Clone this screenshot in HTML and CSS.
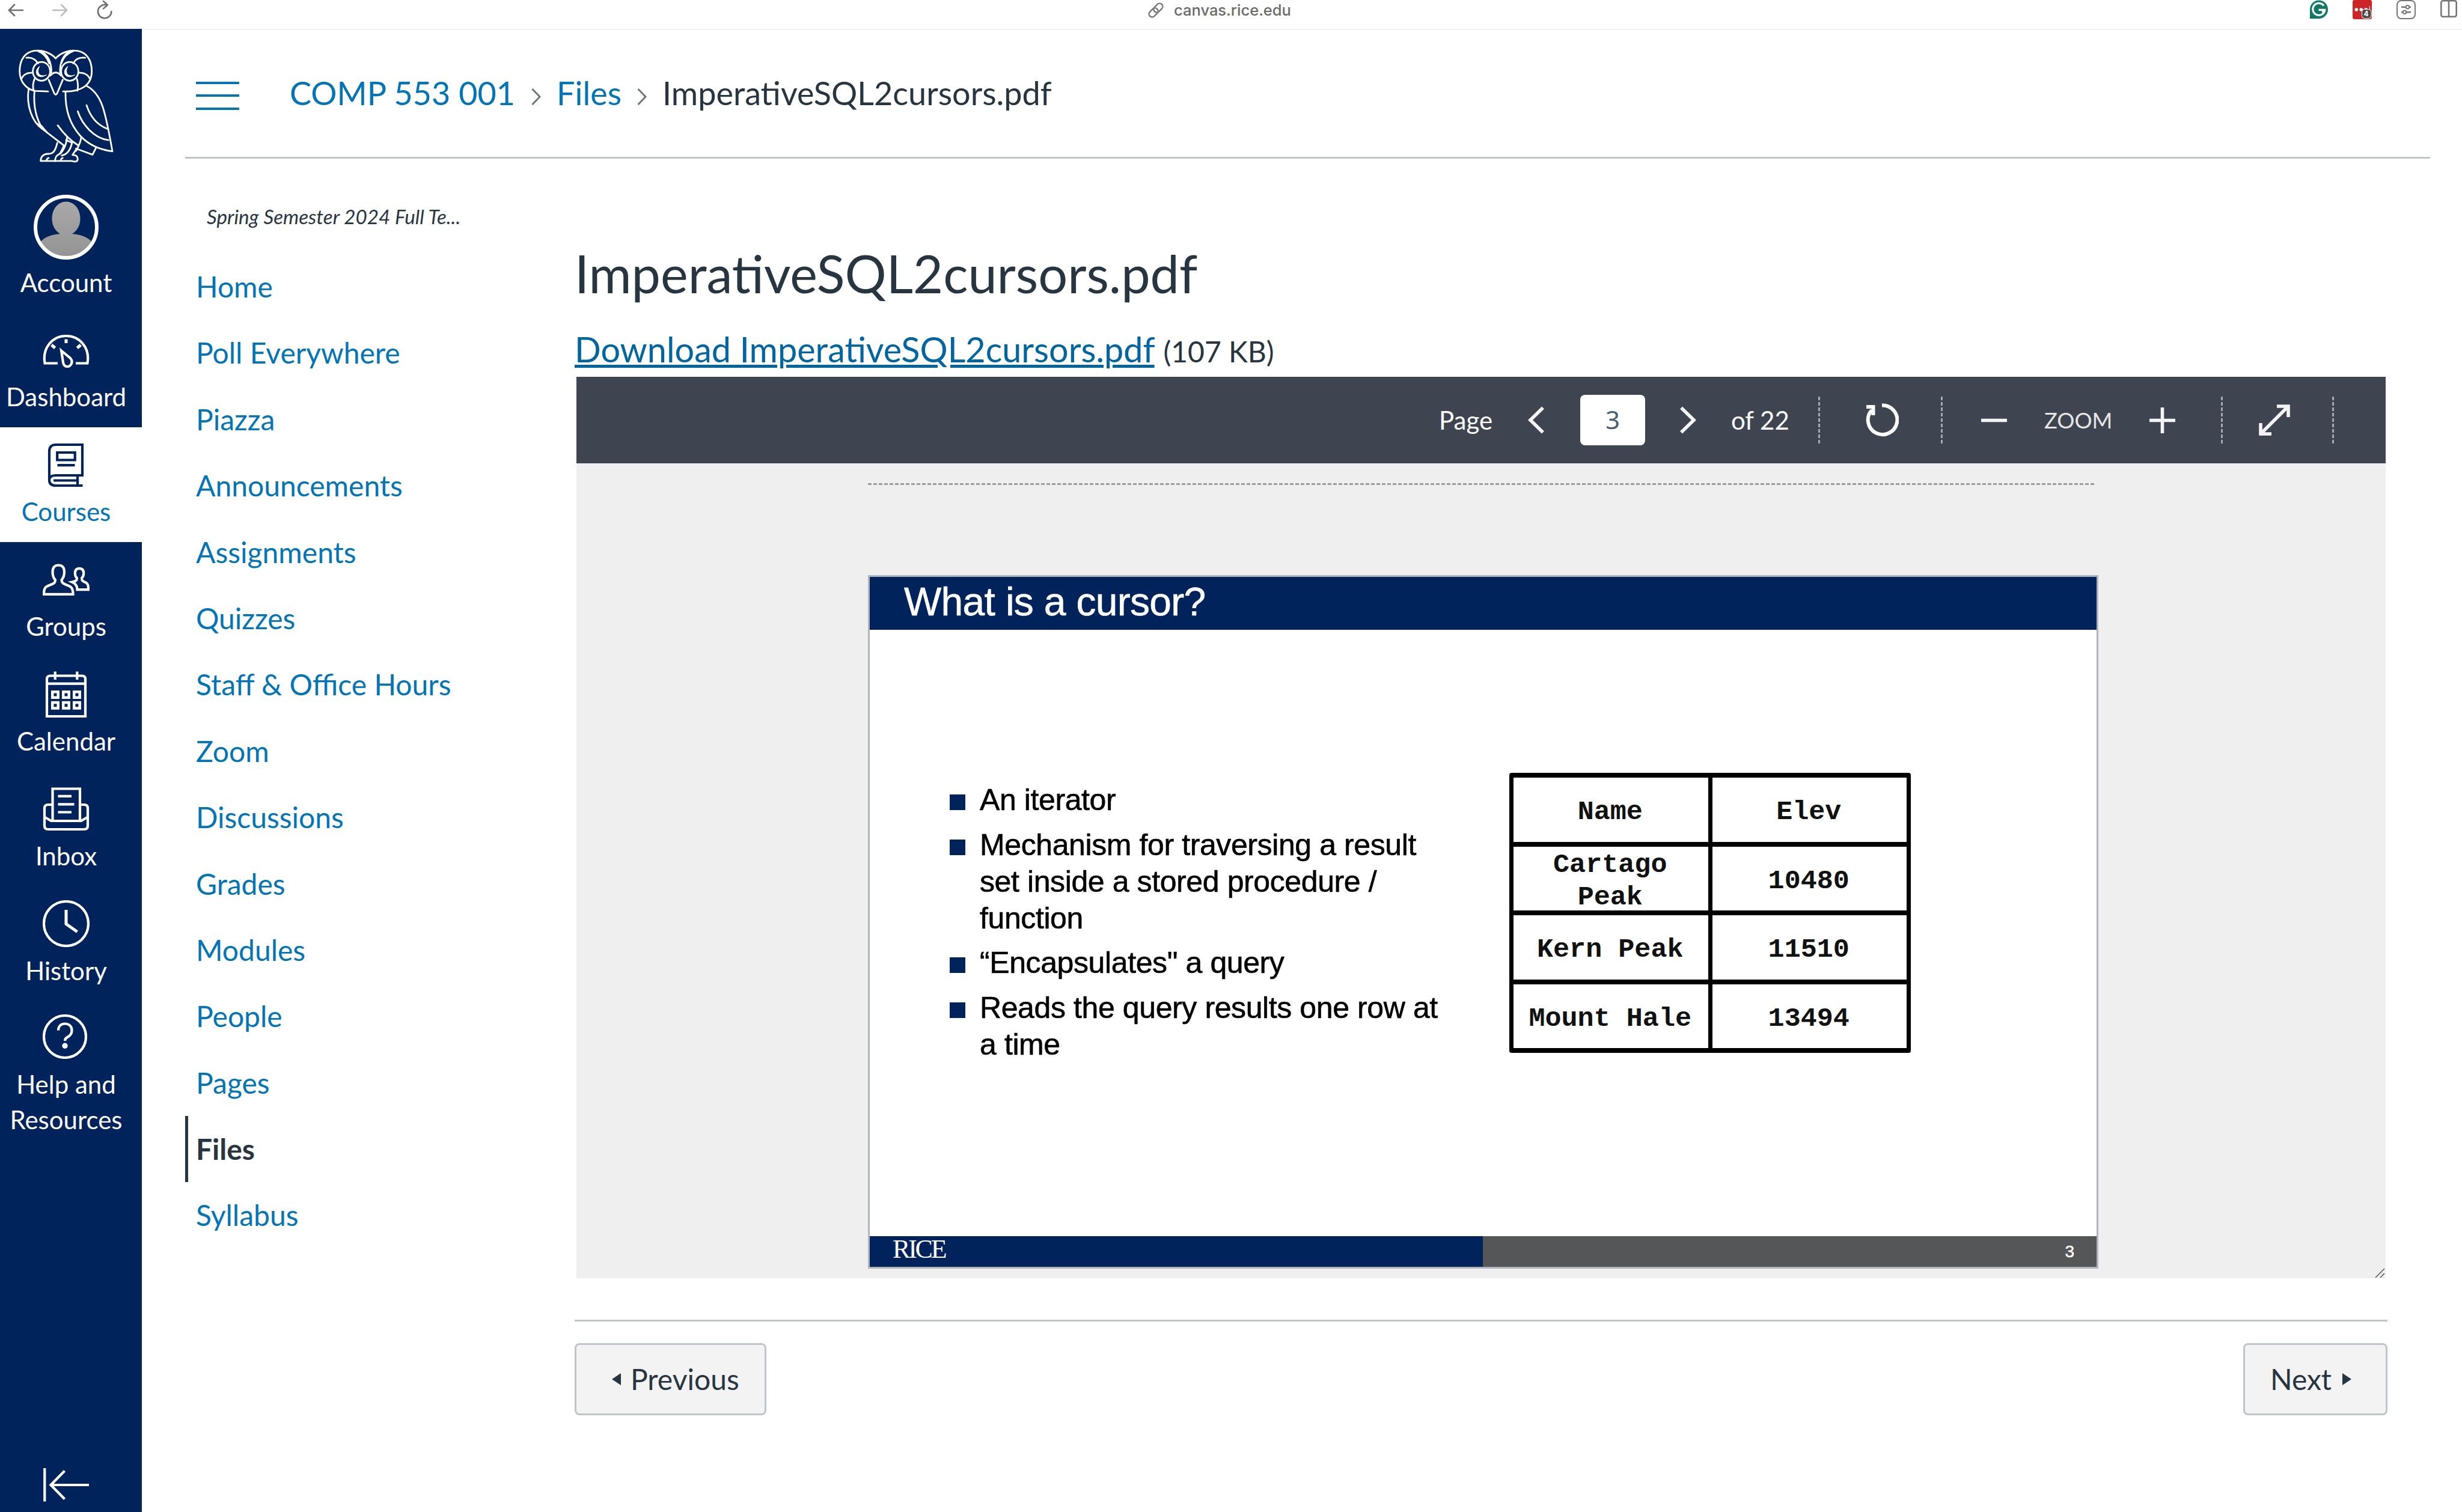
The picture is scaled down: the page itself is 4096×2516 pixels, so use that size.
FILE: index.html
```
<!DOCTYPE html>
<html lang="en">
<head>
<meta charset="utf-8">
<title>ImperativeSQL2cursors.pdf</title>
<link rel="stylesheet" href="styles.css">
</head>
<body>
<header class="browser">
  <div class="browser-nav">
    <svg width="26" height="22" viewBox="0 0 26 22"><path d="M25 11H2M11 2L2 11l9 9"/></svg>
    <svg class="dim" width="26" height="22" viewBox="0 0 26 22"><path d="M1 11h23M15 2l9 9-9 9"/></svg>
    <svg class="reload" width="26" height="32" viewBox="0 0 26 32"><path d="M14.5 8A11.2 11.2 0 1 0 24.3 19M11 2l7 6.2-7 6.2"/></svg>
  </div>
  <div class="browser-url">
    <svg width="26" height="26" viewBox="0 0 26 26"><g transform="rotate(-45 13 13)"><rect x="-1" y="7.8" width="17" height="10.4" rx="5.2"/><rect x="10" y="7.8" width="17" height="10.4" rx="5.2"/></g></svg>
    <span>canvas.rice.edu</span>
  </div>
  <div class="browser-ext">
    <svg width="30" height="31" viewBox="0 0 30 31"><path class="badge-drop" d="M0 31V15.5A15 15.3 0 1 1 15 31z"/><path d="M23 9.5A10 10 0 1 0 24.8 16.3H14.5M20.5 20.5l4.3-4.2" fill="none" stroke="#fff" stroke-width="3.2"/></svg>
    <svg width="32" height="32" viewBox="0 0 32 32"><rect width="32" height="32" rx="3" fill="#cb2429"/><circle cx="6.3" cy="16" r="2.8" fill="#fff"/><circle cx="14.3" cy="16" r="2.8" fill="#fff"/><circle cx="22.3" cy="16" r="2.8" fill="#fff"/><path d="M28.3 10v8" stroke="#fff"/><rect x="15.5" y="15.5" width="15.5" height="15" rx="4" fill="#4a4a4a" stroke="#fff"/><text x="22.500" y="27" text-anchor="middle" class="ext-count">4</text></svg>
    <svg width="32" height="32" viewBox="0 0 32 32"><g fill="none" stroke="#767676" stroke-width="2"><rect x="1" y="1" width="30" height="30" rx="7"/><path d="M8 11.7h7.500M21.500 11.700H24M8 20.300h2.500M16.500 20.300H24" stroke-width="2.400"/><circle cx="18.500" cy="11.700" r="2.700"/><circle cx="13.500" cy="20.300" r="2.700"/></g></svg>
    <svg width="28" height="29" viewBox="0 0 28 29"><g fill="none" stroke="#767676" stroke-width="2.600"><rect x="1.300" y="1.300" width="25.400" height="26.400" rx="3"/><path d="M14 1v27"/></g></svg>
  </div>
</header>

<div class="app">
  <nav class="global-nav">
    <a class="logo">
      <svg width="160" height="192" viewBox="90 175 480 418" preserveAspectRatio="none">
        <path d="M278 210C225 168 98 165 98 256C98 300 140 325 178 328L240 330"/>
        <path d="M278 210C330 168 458 165 458 256C458 310 400 332 315 330"/>
        <ellipse cx="207" cy="257" rx="43" ry="34"/><ellipse cx="348" cy="257" rx="43" ry="34"/>
        <path class="solid" d="M197 240C165 254 182 292 232 270C198 280 180 262 197 240z"/>
        <path class="solid" d="M338 240C306 254 323 292 373 270C339 280 321 262 338 240z"/>
        <path d="M256 262C258 225 240 195 200 184M245 228C233 202 215 190 190 184"/>
        <path d="M300 262C298 225 315 195 352 184M306 228C318 202 340 190 365 184"/>
        <path d="M132 208C160 205 178 215 190 228M108 283C120 265 140 262 164 262M425 208C395 205 375 215 365 228M448 283C435 265 415 262 391 262"/>
        <path d="M168 327C162 310 165 300 172 285M386 327C392 310 390 300 384 285"/>
        <path d="M243 288L271 337Q278 346 285 337L313 288M250 273Q278 250 306 273"/>
        <path d="M143 320C130 380 160 440 210 465L318 525M172 328C165 390 185 435 215 468"/>
        <path class="solid" d="M178 442C190 456 210 470 240 480L210 454z"/>
        <path d="M327 333C325 400 350 450 400 490C440 522 490 540 561 547C545 480 530 420 510 380C490 342 460 320 432 310"/>
        <path d="M388 402C410 450 470 500 541 506M432 380C450 420 480 450 535 465"/>
        <path d="M288 453C320 485 355 510 388 524M380 537L462 559L480 533M405 495C405 510 395 525 380 545"/>
        <path d="M286 516C275 550 262 556 240 556C215 556 203 568 203 582H360C375 586 388 584 388 575C388 562 375 560 362 560L380 540"/>
        <path d="M318 528C305 550 300 556 285 562C275 568 275 580 276 582M335 495C330 530 310 550 300 556M360 515C350 545 335 558 308 562"/>
        <path d="M330 506L354 514M232 580Q236 571 243 571M303 580Q307 571 313 571"/>
      </svg>
    </a>
    <a class="nav-item account">
      <svg width="108" height="108" viewBox="0 0 108 108"><defs><linearGradient id="g" x1="0" y1="0" x2="0" y2="1"><stop offset="0" stop-color="#aaa8a8"/><stop offset="1" stop-color="#939393"/></linearGradient><clipPath id="c"><circle cx="54" cy="54" r="49"/></clipPath></defs><path clip-path="url(#c)" fill="url(#g)" d="M54 11.500c13 0 23.500 12 23.500 28.500 0 12-6 21-13.500 25 20 2 30 8 36 18V108H8V83c6-10 16-16 36-18-7.500-4-13.500-13-13.500-25 0-16.500 10.500-28.500 23.500-28.500z"/><circle cx="54" cy="54" r="51" fill="none" stroke="#fff" stroke-width="6"/></svg>
      <span>Account</span>
    </a>
    <a class="nav-item">
      <svg width="78" height="78" viewBox="0 0 78 78"><path d="M25 61.500H3.600C-1 36 16 16 39 16S79 36 74.400 61.500H55"/><path d="M39 21.500v6.500M14.800 31l5.800 5M63.200 31l-5.800 5" stroke-width="5"/><path d="M31 40.500L46 53C52 60 46 67 41 67C37 67 34.500 64 34 60z"/></svg>
      <span>Dashboard</span>
    </a>
    <a class="nav-item active">
      <svg width="78" height="78" viewBox="0 0 78 78"><path d="M66 57V6H22Q11 6 11 17V65Q11 74 22 74H66.500M11 65Q11 57 22 57H68M18 65.500H58M58 57V74"/><path d="M24.200 19h29.500v12.500H24.200zM24.500 40.200H53.500"/></svg>
      <span>Courses</span>
    </a>
    <a class="nav-item">
      <svg width="78" height="78" viewBox="0 0 78 78"><path d="M2 63.800C2 53 5 51 12 48.500C19 46 21 45 21 40C17 36 16.500 32 16.500 27C16.500 19 20 15.500 26.300 15.500S36 19 36 27C36 32 35 36 31.500 40C31.500 45 34 46 40 48.500C48 51 50.500 54 50.500 63.800z"/><path d="M49 43.500C54 42.500 57 41.500 57 37C54.500 34.500 53.800 32 53.800 29C53.800 23.500 56.500 20.800 61 20.800S68.200 23.500 68.200 29C68.200 32 67.500 34.500 65 37C65 41.500 67 42.500 71 44C75 46 76 48 76 56.200H57.500C57.500 50 55 46 49 43.500z"/></svg>
      <span>Groups</span>
    </a>
    <a class="nav-item">
      <svg width="78" height="78" viewBox="0 0 78 78"><path d="M7 76V14Q7 8.500 12.500 8.500H65.500Q71 8.500 71 14V76zM7 21.700H71"/><path d="M20.700 1.500V15M57.300 1.500V15"/><path stroke-width="4.500" d="M16.200 35.200h9.500v9.500h-9.500zM34.200 35.200h9.500v9.500h-9.500zM52.200 35.200h9.500v9.500h-9.500zM16.200 53h9.500v9.500h-9.500zM34.200 53h9.500v9.500h-9.500zM52.200 53h9.500v9.500h-9.500z"/></svg>
      <span>Calendar</span>
    </a>
    <a class="nav-item">
      <svg width="78" height="78" viewBox="0 0 78 78"><path d="M16.500 58V5.500H62V58M25.500 17.800H48M25.500 31.400H52.500M25.500 44.500H48"/><path d="M16 32H9Q3 32 3 38V67Q3 73 9 73H69Q75 73 75 67V38Q75 32 69 32H62M3 52.500L14 59H64L75 52.500"/></svg>
      <span>Inbox</span>
    </a>
    <a class="nav-item">
      <svg width="78" height="78" viewBox="0 0 78 78"><circle cx="39" cy="39" r="37"/><path stroke-width="5" d="M39 16V39.500L57.500 52.500"/></svg>
      <span>History</span>
    </a>
    <a class="nav-item help">
      <svg width="74" height="74" viewBox="0 0 74 74"><circle cx="37" cy="37" r="35"/><path d="M26 26.500C26 19 31 15.500 37 15.500C44 15.500 48.500 20 48.500 26.500C48.500 33 45 36 41 38C38 39.500 37 41 37 44"/><circle class="solid" cx="37" cy="52.300" r="2.600"/></svg>
      <span>Help and<br>Resources</span>
    </a>
    <a class="collapse">
      <svg width="76" height="56" viewBox="0 0 76 56"><path d="M2.300 0V55.500M13 28H76M35.500 4.500L12.500 28L35.500 51.500"/></svg>
    </a>
  </nav>

  <div class="page">
    <header class="crumb-bar">
      <button class="menu-toggle"><i></i><i></i><i></i></button>
      <div class="crumbs">
        <a class="crumb-course">COMP 553 001</a>
        <svg width="16" height="28" viewBox="0 0 16 28"><path d="M1.500 1L14 14L1.500 27"/></svg>
        <a class="crumb-files">Files</a>
        <svg width="16" height="28" viewBox="0 0 16 28"><path d="M1.500 1L14 14L1.500 27"/></svg>
        <span class="crumb-file">ImperativeSQL2cursors.pdf</span>
      </div>
    </header>

    <div class="columns">
      <aside class="course-menu">
        <p class="term">Spring Semester 2024 Full Te...</p>
        <a>Home</a>
        <a>Poll Everywhere</a>
        <a>Piazza</a>
        <a>Announcements</a>
        <a>Assignments</a>
        <a>Quizzes</a>
        <a>Staff &amp; Office Hours</a>
        <a>Zoom</a>
        <a>Discussions</a>
        <a>Grades</a>
        <a>Modules</a>
        <a>People</a>
        <a>Pages</a>
        <a class="current">Files</a>
        <a>Syllabus</a>
      </aside>

      <main class="content">
        <h1>ImperativeSQL2cursors.pdf</h1>
        <p class="download"><a>Download ImperativeSQL2cursors.pdf</a> <small>(107 KB)</small></p>

        <section class="viewer">
          <div class="toolbar">
            <span class="tool-page">Page</span>
            <svg width="28" height="46" viewBox="0 0 28 46"><path d="M25 2.500L4 23L25 43.500"/></svg>
            <span class="page-input">3</span>
            <svg width="28" height="46" viewBox="0 0 28 46"><path d="M3 2.500L24 23L3 43.500"/></svg>
            <span>of 22</span>
            <i class="sep"></i>
            <svg class="rotate" width="56" height="56" viewBox="0 0 56 56"><path d="M28 3.500A24.300 24.300 0 1 1 11 11.500M2 6H13.500V20"/></svg>
            <i class="sep"></i>
            <svg width="43" height="43" viewBox="0 0 43 43"><path d="M0 21.500H43"/></svg>
            <span class="tool-zoom">ZOOM</span>
            <svg width="43" height="43" viewBox="0 0 43 43"><path d="M0 21.500H43M21.500 0V43"/></svg>
            <i class="sep"></i>
            <svg width="52" height="52" viewBox="0 0 52 52"><path d="M3 49L49 3M30 3H49V21M3 31V49H21"/></svg>
            <i class="sep"></i>
          </div>
          <div class="pages">
            <div class="page-gap"></div>
            <article class="slide">
              <h2>What is a cursor?</h2>
              <div class="slide-body">
                <ul>
                  <li>An iterator</li>
                  <li>Mechanism for traversing a result<br>set inside a stored procedure /<br>function</li>
                  <li>“Encapsulates" a query</li>
                  <li>Reads the query results one row at<br>a time</li>
                </ul>
                <div class="peaks">
                  <div>Name</div><div>Elev</div>
                  <div>Cartago<br>Peak</div><div>10480</div>
                  <div>Kern Peak</div><div>11510</div>
                  <div>Mount Hale</div><div>13494</div>
                </div>
              </div>
              <footer><span class="rice">RICE</span><span class="slide-no">3</span></footer>
            </article>
            <svg class="grip" width="17" height="17" viewBox="0 0 17 17"><path d="M1 16L16 1M9 16L16 9"/></svg>
          </div>
        </section>

        <div class="pager">
          <button class="prev"><svg width="15" height="20" viewBox="0 0 15 20"><path d="M15 0V20L0 10z"/></svg><span>Previous</span></button>
          <button class="next"><span>Next</span><svg width="15" height="20" viewBox="0 0 15 20"><path d="M0 0V20L15 10z"/></svg></button>
        </div>
      </main>
    </div>
  </div>
</div>
</body>
</html>
```
FILE: styles.css
```
* { box-sizing: border-box; }
body {
  margin: 0;
  width: 4096px;
  height: 2516px;
  overflow: hidden;
  background: #fff;
  color: #273540;
  font-family: Lato, "Liberation Sans", sans-serif;
}
svg { display: block; flex: none; }
h1, h2, p, ul { margin: 0; padding: 0; font-weight: 400; }
button { margin: 0; padding: 0; font: inherit; color: inherit; }

/* browser chrome */
.browser {
  height: 48px;
  display: grid;
  grid-template-columns: 1910px 1933px 1fr;
}
.browser path, .browser-url rect { fill: none; }
.browser-nav { display: flex; padding: 0 0 0 13px; color: #6e6e6e; }
.browser-nav svg { margin: 6px 48px 0 0; fill: none; stroke: #6e6e6e; stroke-width: 2.6; stroke-linecap: round; stroke-linejoin: round; }
.browser-nav .dim { stroke: #bdbdbd; }
.browser-nav .reload { margin-top: 0; }
.browser-url { display: flex; gap: 17px; color: #6b6b6b; font: 500 25.5px/33px Inter, sans-serif; }
.browser-url svg { margin-top: 4px; fill: none; stroke: #767676; stroke-width: 2.4; }
.browser-ext { display: flex; gap: 41px; }
.browser-ext .badge-drop { fill: #117865; }
.ext-count { font: 700 12px Inter, sans-serif; fill: #fff; }

.app { display: flex; height: 2468px; }

/* global navigation */
.global-nav {
  width: 236px;
  background: #00235b;
  color: #fff;
  display: flex;
  flex-direction: column;
  flex: none;
}
.global-nav svg { fill: none; stroke: currentColor; stroke-width: 4.2; }
.logo { height: 254px; padding: 33px 0 0 30px; }
.logo svg { stroke-width: 2.8; stroke-linejoin: round; stroke-linecap: round; }
.logo path, .logo ellipse { vector-effect: non-scaling-stroke; }
.logo .solid { fill: #fff; stroke-width: 1; }
.nav-item {
  height: 191px;
  padding: 23px 16px 0 0;
  display: flex;
  flex-direction: column;
  align-items: center;
  gap: 10px;
  font-size: 42px;
  line-height: 59px;
  text-align: center;
}
.nav-item.account { height: 218px; padding-top: 22px; gap: 9px; }
.nav-item.account path { stroke: none; }
.nav-item.active { background: #fff; color: #00235b; }
.nav-item.active span { color: #0374b5; }
.nav-item.help { height: 240px; padding-top: 22px; gap: 13px; }
.nav-item.help svg { margin-right: 4px; }
.solid { fill: currentColor; }
.collapse { margin-top: auto; padding: 0 0 17px 72px; }

/* page frame */
.page { flex: 1; border-top: 2px solid #f0f0f0; padding: 0 53px 0 72px; }
.crumb-bar {
  height: 214px;
  border-bottom: 3px solid #c0c5c9;
  display: flex;
  align-items: center;
  padding-left: 18px;
}
.menu-toggle {
  width: 72px;
  height: 47px;
  margin-top: 7px;
  border: 0;
  background: none;
  display: flex;
  flex-direction: column;
  justify-content: space-between;
}
.menu-toggle i { height: 4px; width: 100%; background: #0374b5; }
.crumbs { display: flex; align-items: center; margin: -3px 0 0 84px; font-size: 54px; line-height: 81px; color: #0374b5; }
.crumbs svg { margin-top: 14px; fill: none; stroke: #6f777d; stroke-width: 3; }
.crumb-course { width: 402px; }
.crumb-files { width: 134px; margin-left: 26px; }
.crumb-file { margin-left: 26px; color: #273540; }

.columns { display: flex; }
.course-menu { width: 648px; padding-top: 71px; flex: none; }
.term { height: 50px; margin: 0 0 37px 36px; font-size: 33.2px; line-height: 50px; font-style: italic; }
.course-menu a {
  display: block;
  height: 110.4px;
  padding-left: 13px;
  border-left: 5px solid transparent;
  color: #0374b5;
  font-size: 48px;
  line-height: 110.4px;
}
.course-menu .current { color: #273540; border-color: #273540; font-weight: 700; }

.content { width: 3016px; padding-top: 139px; }
h1 { height: 104px; font-size: 86.4px; line-height: 104px; }
.download { height: 120px; padding-top: 30px; font-size: 57.6px; line-height: 87px; }
.download a { color: #0165a2; text-decoration: underline; text-decoration-thickness: 5px; text-underline-offset: 4px; }
.download small { font-size: 48px; }

/* document viewer */
.viewer { width: 3010px; margin-left: 3px; }
.toolbar {
  height: 144px;
  padding-left: 1435px;
  background: #3e4550;
  color: #fff;
  display: grid;
  grid-template-columns: 148px 87px 165px 86px 145px 78px 126px 67px 105px 175px 119px 63px 122px 89px;
  align-items: center;
  font-size: 42px;
}
.toolbar svg { fill: none; stroke: #f4f4f4; stroke-width: 5.6; }
.toolbar .rotate { stroke: #fff; stroke-width: 6; }
.page-input {
  width: 108px;
  height: 84px;
  border-radius: 8px;
  background: #fff;
  color: #47606e;
  font: 42px/82px "Noto Sans", sans-serif;
  text-align: center;
}
.tool-zoom { font-size: 36.4px; color: #e6e6e6; }
.sep { width: 3px; height: 78px; background: repeating-linear-gradient(#a4a8b0 0 6px, transparent 6px 9px); }
.pages { position: relative; height: 1356px; padding: 33px 0 0 485px; background: #efefef; }
.page-gap { width: 2040px; height: 3px; margin-bottom: 150px; background: repeating-linear-gradient(90deg, #9c9c9c 0 6px, transparent 6px 9px); }
.slide { width: 2047px; height: 1154px; border: 3px solid #aeb5bc; background: #fff; display: flex; flex-direction: column; font-family: "Liberation Sans", sans-serif; color: #000; }
.slide h2 { height: 88px; padding-left: 57px; background: #00235b; color: #fff; font-size: 66px; line-height: 82px; letter-spacing: -0.7px; -webkit-text-stroke: 0.6px #fff; }
.slide-body { flex: 1; display: flex; align-items: flex-start; }
.slide ul { list-style: none; width: 1064px; padding: 253px 0 0 133px; font-size: 50px; line-height: 61px; letter-spacing: -0.4px; -webkit-text-stroke: 0.6px #000; }
.slide li { position: relative; padding-left: 50px; margin-bottom: 13.5px; white-space: nowrap; }
.slide li::before { content: ""; position: absolute; left: 0; top: 21px; width: 26px; height: 26px; background: #00235b; }
.peaks {
  width: 668px;
  height: 466px;
  margin-top: 238px;
  padding: 8px 7px;
  display: grid;
  grid-template-columns: 1fr 1fr;
  grid-template-rows: repeat(4, 1fr);
  gap: 8px 7px;
  background: #000;
  border-radius: 4px;
  font: 700 45.1px/54px "Liberation Mono", monospace;
}
.peaks div { min-height: 0; padding: 8px 2px 0 0; background: #fff; display: flex; align-items: center; justify-content: center; text-align: center; color: #111; }
.slide footer { height: 51px; display: flex; justify-content: space-between; background: linear-gradient(90deg, #00235b 1020px, #555658 1020px); color: #fff; }
.rice { padding-left: 38px; font: 44px/43px "Liberation Serif", serif; letter-spacing: -3.2px; }
.slide-no { padding-right: 37px; font-size: 28px; line-height: 51px; -webkit-text-stroke: 0.5px #fff; }
.grip { position: absolute; right: 1px; bottom: 0; fill: none; stroke: #555; stroke-width: 1.5; }

/* pager */
.pager { margin-top: 69px; padding-top: 36px; border-top: 3px solid #c0c5c9; display: flex; justify-content: space-between; }
.pager button { height: 120px; border: 3px solid #c0c5c9; border-radius: 8px; background: #f3f3f3; font-size: 48px; line-height: 58px; padding-bottom: 1px; display: flex; align-items: center; }
.pager svg { fill: #273540; }
.pager .prev { width: 319px; padding-left: 59px; gap: 16px; }
.pager .next { width: 240px; padding-left: 42px; gap: 18px; }
```
